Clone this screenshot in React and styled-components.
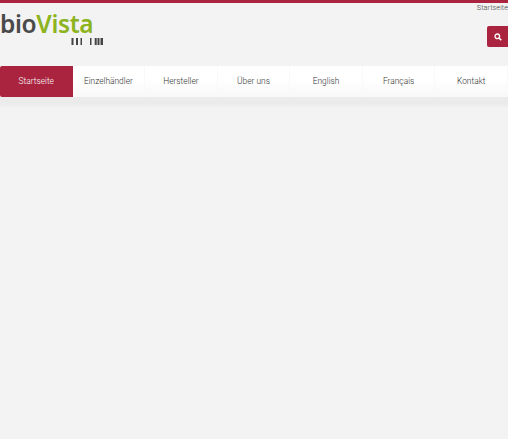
import React from "react";
import styled, { createGlobalStyle } from "styled-components";

const Global = createGlobalStyle`
  html, body { margin: 0; padding: 0; background: #f3f3f3; }
  body { font-family: Roboto, "Liberation Sans", sans-serif; width: 508px; height: 439px; overflow: hidden; }
`;

const Page = styled.div`
  width: 508px;
  height: 439px;
  border-top: 3px solid #aa243f;
  box-sizing: border-box;
  background: #f3f3f3;
`;

const Header = styled.header`
  display: flex;
  justify-content: space-between;
  height: 63px;
`;

const Logo = styled.div`
  display: flex;
  flex-direction: column;
  align-items: flex-end;
  width: 104px;
  padding-top: 6px;
`;

const LogoText = styled.div`
  width: 100%;
  margin-left: -2px;
  font-family: "Noto Sans", sans-serif;
  font-size: 24.5px;
  font-weight: 600;
  line-height: 29px;
  letter-spacing: -0.35px;
  color: #4a4a4a;
  white-space: nowrap;
`;

const Green = styled.span`
  color: #8db31e;
`;

const Barcode = styled.svg`
  display: block;
`;

const Tools = styled.div`
  display: flex;
  flex-direction: column;
  align-items: flex-end;
`;

const TopLink = styled.a`
  font-size: 7.4px;
  font-weight: 300;
  line-height: 10px;
  color: #444;
`;

const SearchButton = styled.button`
  display: flex;
  align-items: center;
  justify-content: center;
  width: 21px;
  height: 21px;
  margin-top: 13px;
  padding: 0;
  border: 0;
  border-radius: 2px 0 0 2px;
  background: #aa243f;
`;

const Nav = styled.nav`
  display: grid;
  grid-template-columns: repeat(7, 1fr);
  height: 31px;
  background: linear-gradient(#ffffff 40%, #f8f8f8);
`;

const NavShadow = styled.div`
  height: 11px;
  background: linear-gradient(#ebebeb 60%, #f3f3f3);
`;

const NavItem = styled.a`
  display: flex;
  align-items: center;
  justify-content: center;
  padding-bottom: 1px;
  font-size: 8.4px;
  font-weight: 300;
  color: ${p => (p.$active ? "#fff" : "#333")};
  background: ${p => (p.$active ? "#aa243f" : "transparent")};
  border-radius: ${p => (p.$active ? "2px 0 0 2px" : "0")};
  border-right: ${p => (p.$active ? "0" : "1px solid #f9f9f9")};
`;

const items = ["Startseite", "Einzelhändler", "Hersteller", "Über uns", "English", "Français", "Kontakt"];
const bars = [[1.5,2],[6,2],[10.5,1.5],[20,1.5],[24.7,2],[27.5,2],[30.5,2.5]];

export default function App() {
  return (
    <Page>
      <Global />
      <Header>
        <Logo>
          <LogoText>bio<Green>Vista</Green></LogoText>
          <Barcode width="34" height="7" viewBox="0 0 34 7">
            {bars.map(([x, w]) => <rect key={x} x={x} y="0" width={w} height="7" fill="#444" />)}
          </Barcode>
        </Logo>
        <Tools>
          <TopLink>Startseite</TopLink>
          <SearchButton aria-label="Suche">
            <svg width="8" height="8" viewBox="0 0 8 8" fill="none" stroke="#fff">
              <circle cx="3.3" cy="3.3" r="2.3" strokeWidth="1.3" />
              <path d="M5 5l2.3 2.3" strokeWidth="1.6" />
            </svg>
          </SearchButton>
        </Tools>
      </Header>
      <Nav>
        {items.map((t, i) => <NavItem key={t} $active={i === 0}>{t}</NavItem>)}
      </Nav>
      <NavShadow />
    </Page>
  );
}
